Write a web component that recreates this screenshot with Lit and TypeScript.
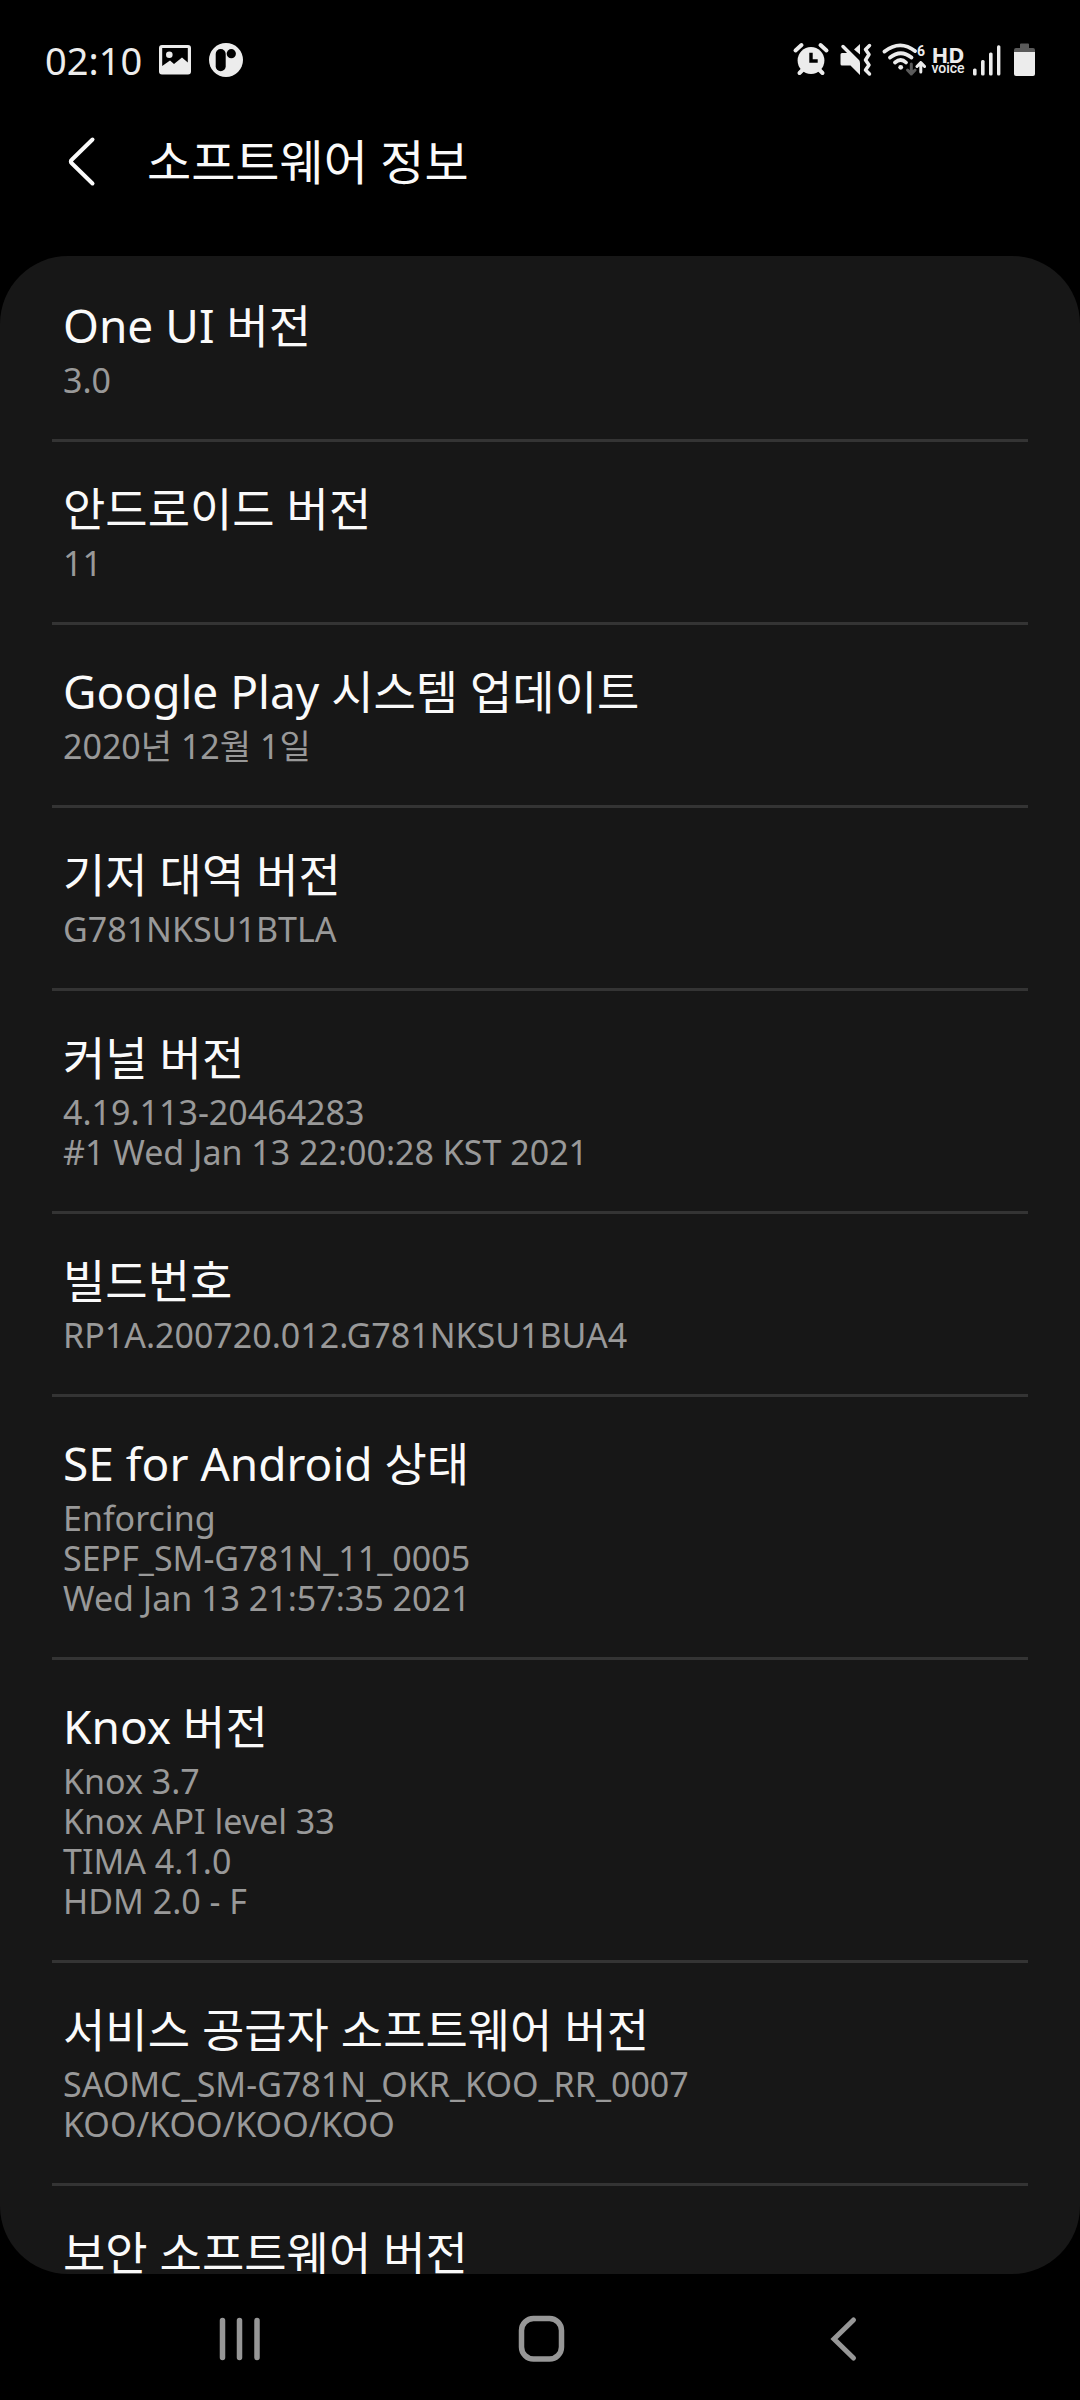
import { LitElement, html, css } from "lit";
import { customElement } from "lit/decorators.js";

interface InfoItem {
  title: string;
  lines: string[];
}

const ITEMS: InfoItem[] = [
  { title: "One UI 버전", lines: ["3.0"] },
  { title: "안드로이드 버전", lines: ["11"] },
  { title: "Google Play 시스템 업데이트", lines: ["2020년 12월 1일"] },
  { title: "기저 대역 버전", lines: ["G781NKSU1BTLA"] },
  { title: "커널 버전", lines: ["4.19.113-20464283", "#1 Wed Jan 13 22:00:28 KST 2021"] },
  { title: "빌드번호", lines: ["RP1A.200720.012.G781NKSU1BUA4"] },
  {
    title: "SE for Android 상태",
    lines: ["Enforcing", "SEPF_SM-G781N_11_0005", "Wed Jan 13 21:57:35 2021"],
  },
  { title: "Knox 버전", lines: ["Knox 3.7", "Knox API level 33", "TIMA 4.1.0", "HDM 2.0 - F"] },
  {
    title: "서비스 공급자 소프트웨어 버전",
    lines: ["SAOMC_SM-G781N_OKR_KOO_RR_0007", "KOO/KOO/KOO/KOO"],
  },
  { title: "보안 소프트웨어 버전", lines: [] },
];

@customElement("status-bar")
class StatusBar extends LitElement {
  static styles = css`
    :host {
      display: flex;
      justify-content: space-between;
      align-items: center;
      box-sizing: border-box;
      height: 98px;
      padding: 22px 41px 0 45px;
      color: #ececec;
    }
    .group {
      display: flex;
      align-items: center;
    }
    .left {
      gap: 13px;
    }
    .right {
      gap: 4px;
    }
    .time {
      font-size: 38px;
      line-height: 40px;
    }
    .icon {
      display: block;
      height: 40px;
      fill: currentColor;
    }
    .line {
      fill: none;
      stroke: currentColor;
      stroke-linecap: round;
      stroke-linejoin: round;
    }
    .hole {
      fill: #000;
    }
    .dim {
      fill: #5a5a5a;
    }
    .dim-line {
      stroke: #5a5a5a;
    }
    .six {
      font-family: Roboto, sans-serif;
      font-size: 14px;
      font-weight: 700;
    }
    .volte {
      display: flex;
      flex-direction: column;
      align-items: center;
      width: 36px;
    }
    .hd {
      font-size: 22px;
      line-height: 16px;
      font-weight: 700;
    }
    .voice {
      font-family: Roboto, sans-serif;
      font-size: 14px;
      line-height: 12px;
      font-weight: 500;
    }
  `;

  render() {
    return html`
      <div class="group left">
        <span class="time">02:10</span>
        <svg class="icon" width="40" viewBox="156 40 40 40" aria-hidden="true">
          <path
            fill-rule="evenodd"
            d="M163 45h26a3 3 0 0 1 3 3v23.500a3 3 0 0 1-3 3h-26a3 3 0 0 1-3-3V48a3 3 0 0 1 3-3Zm.2 3v18l7.800-5.500 4 3.500 8-6.500 5.800 5V48Z"
          />
          <circle cx="170.300" cy="54.700" r="3.300" />
        </svg>
        <svg class="icon" width="36" viewBox="208 40 36 40" aria-hidden="true">
          <circle cx="226" cy="60" r="17" />
          <rect class="hole" x="215.700" y="49" width="10" height="22.300" rx="5" />
          <circle class="hole" cx="231.300" cy="53.700" r="4.600" />
        </svg>
      </div>
      <div class="group right">
        <svg class="icon" width="42" viewBox="790 40 42 40" aria-hidden="true">
          <circle cx="811" cy="60.500" r="13.400" />
          <path class="line" stroke-width="4" stroke-linecap="butt" d="m795.500 50.500 6-5.500M826.500 50.500l-6-5.500" />
          <path class="line" stroke-width="4" d="m799.500 73 3-3M822.500 73l-3-3" />
          <path class="hole" d="M809.300 52.700h3.400v6.600h5v3.400h-8.400Z" />
        </svg>
        <svg class="icon" width="40" viewBox="836 40 40 40" aria-hidden="true">
          <path d="M842 53h7l11 9.500V75l-9.500-9.500H842a1.500 1.500 0 0 1-1.500-1.500v-9.500a1.500 1.500 0 0 1 1.500-1.500Z" />
          <path class="line" stroke-width="3.500" d="M843 46.500 858 61.500" />
          <path d="M860 44v10.500L854 49.500Z" />
          <path class="line" stroke-width="3.500" d="m869.500 45.500-4 4 3.500 5-3.500 5.500 3.500 5-3.500 5 4 4" />
        </svg>
        <svg class="icon" width="46" viewBox="880 40 46 40" aria-hidden="true">
          <path class="line" stroke-width="3.800" stroke-linecap="butt" d="M884.500 51.500Q900 39.500 915 51" />
          <path class="line" stroke-width="3.800" d="M890 57.500Q900.800 49 911.500 57.500M895 62.500Q900.800 57.500 906 62.500" />
          <circle cx="900.700" cy="67.300" r="2.400" />
          <path class="line dim-line" stroke-width="3" stroke-linecap="butt" d="M911.300 64v10M907.500 70l3.800 4 3.800-4" />
          <path class="line" stroke-width="3" stroke-linecap="butt" d="M920.800 72V62.500M917 66.500l3.800-4 3.800 4" />
          <text class="six" x="917" y="56">6</text>
        </svg>
        <div class="volte"><span class="hd">HD</span><span class="voice">voice</span></div>
        <svg class="icon" width="36" viewBox="970 40 36 40" aria-hidden="true">
          <rect x="973" y="68.500" width="3.600" height="7" rx="1.500" />
          <rect x="981" y="60" width="3.600" height="15.500" rx="1.500" />
          <rect x="989" y="52.500" width="3.600" height="23" rx="1.500" />
          <rect x="997" y="45.300" width="3.400" height="30.200" rx="1.500" />
        </svg>
        <svg class="icon" width="29" viewBox="1010 40 29 40" aria-hidden="true">
          <path class="dim" d="M1020 44.500a1 1 0 0 1 1-1h7a1 1 0 0 1 1 1V48h4a2 2 0 0 1 2 2v2.500h-21V50a2 2 0 0 1 2-2h4Z" />
          <path d="M1014 52h21v22a2 2 0 0 1-2 2h-17a2 2 0 0 1-2-2Z" />
        </svg>
      </div>
    `;
  }
}

@customElement("info-row")
class InfoRow extends LitElement {
  static properties = { item: { attribute: false } };
  declare item: InfoItem;

  static styles = css`
    :host {
      display: block;
      margin: 0 52px;
      padding: 36px 11px 39px;
      border-bottom: 3px solid #343434;
    }
    .title {
      margin: 0 0 5px;
      font-size: 46px;
      line-height: 60px;
      font-weight: 400;
      color: #fafafa;
    }
    .text {
      margin: 0;
      font-size: 34px;
      line-height: 40px;
      color: #999;
    }
  `;

  render() {
    return html`
      <h2 class="title">${this.item.title}</h2>
      ${this.item.lines.map((line) => html`<p class="text">${line}</p>`)}
    `;
  }
}

@customElement("app-root")
class AppRoot extends LitElement {
  static styles = css`
    :host {
      display: flex;
      flex-direction: column;
      height: 100vh;
      background: #000;
      font-family: "Noto Sans", "Noto Sans CJK KR", sans-serif;
    }
    button {
      display: flex;
      align-items: center;
      justify-content: center;
      padding: 0;
      border: 0;
      background: none;
      color: inherit;
      cursor: pointer;
    }
    .glyph {
      display: block;
      fill: none;
      stroke: currentColor;
      stroke-linecap: round;
      stroke-linejoin: round;
    }
    .sharp {
      stroke-linejoin: miter;
    }
    .app-bar {
      display: flex;
      align-items: center;
      gap: 33px;
      height: 126px;
      margin-bottom: 32px;
      padding-left: 50px;
      color: #fafafa;
    }
    .back {
      width: 64px;
      height: 64px;
    }
    .heading {
      margin: 0;
      padding-top: 2px;
      font-size: 48px;
      line-height: 64px;
      font-weight: 400;
    }
    .card {
      flex: 1;
      min-height: 0;
      box-sizing: border-box;
      padding-top: 3px;
      overflow-y: auto;
      scrollbar-width: none;
      border-radius: 68px;
      background: #171717;
    }
    .nav {
      display: grid;
      grid-template-columns: repeat(3, 1fr);
      box-sizing: border-box;
      height: 126px;
      padding: 4px 88px 0 90px;
      color: #979797;
    }
  `;

  render() {
    return html`
      <status-bar></status-bar>
      <header class="app-bar">
        <button class="back" aria-label="뒤로">
          <svg class="glyph" width="64" height="64" viewBox="50 129 64 64">
            <path stroke-width="4" d="M92.500 139.500 71.500 160a2 2 0 0 0 0 3L92.500 183.500" />
          </svg>
        </button>
        <h1 class="heading">소프트웨어 정보</h1>
      </header>
      <main class="card">${ITEMS.map((item) => html`<info-row .item=${item}></info-row>`)}</main>
      <nav class="nav">
        <button aria-label="최근 앱">
          <svg class="glyph" width="60" height="60" viewBox="0 0 60 60">
            <path stroke-width="5.500" d="M12.500 11.500v37M29.500 11.500v37M47 11.500v37" />
          </svg>
        </button>
        <button aria-label="홈">
          <svg class="glyph" width="60" height="60" viewBox="0 0 60 60">
            <rect x="10.500" y="9.500" width="40" height="40.500" rx="12" stroke-width="5.500" />
          </svg>
        </button>
        <button aria-label="뒤로">
          <svg class="glyph sharp" width="60" height="60" viewBox="0 0 60 60">
            <path stroke-width="5" d="M41.500 11 22 30l19.500 19" />
          </svg>
        </button>
      </nav>
    `;
  }
}
